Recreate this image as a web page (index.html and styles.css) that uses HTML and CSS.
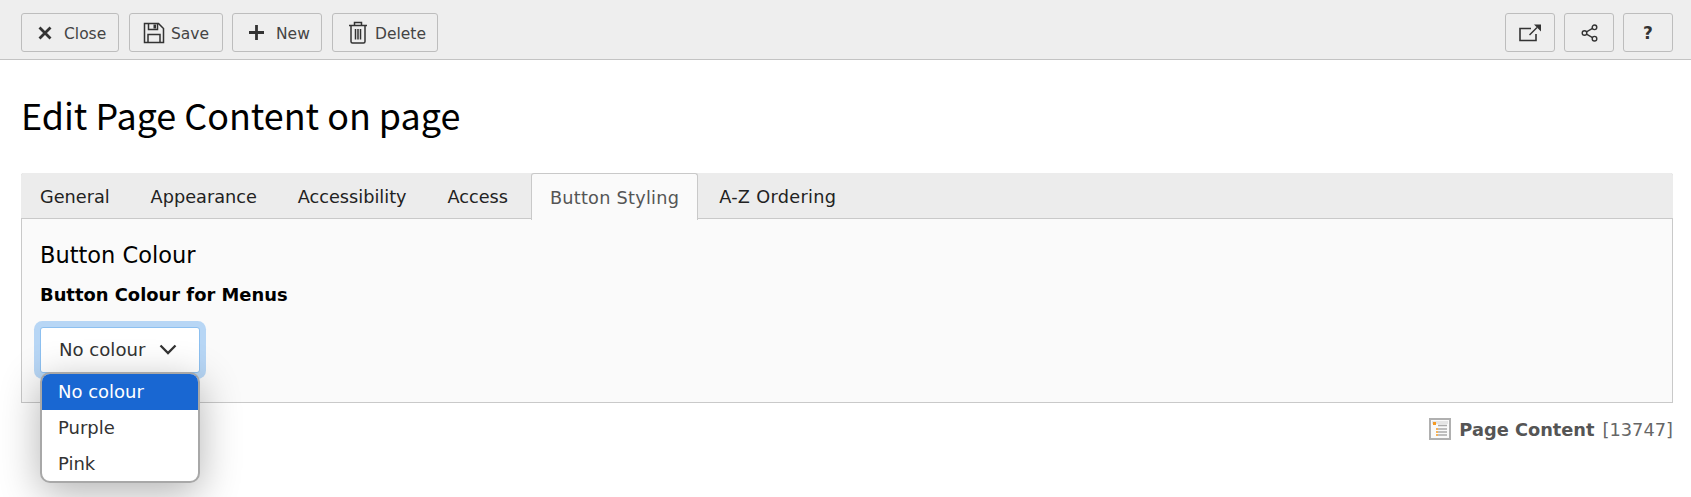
FILE: index.html
```html
<!DOCTYPE html>
<html lang="en">
<head>
<meta charset="utf-8">
<title>Edit Page Content on page</title>
<link rel="stylesheet" href="styles.css">
</head>
<body>
<header class="toolbar">
  <div class="group">
    <button class="btn btn-close"><svg class="ic" width="16" height="16" viewBox="0 0 16 16"><path d="M2.500 2.500l11 11M13.500 2.500l-11 11" fill="none" stroke="#333" stroke-width="2.800"/></svg><span>Close</span></button>
    <button class="btn btn-save"><svg class="ic" width="22" height="22" viewBox="0 0 22 22"><path d="M1.500 1.500h14l5 5v14h-19z M5.500 1.500v6h9v-6 M5 20.500v-8h12v8" fill="none" stroke="#333" stroke-width="1.500"/><rect x="10.500" y="2.500" width="2.500" height="4" fill="#333"/></svg><span>Save</span></button>
    <button class="btn btn-new"><svg class="ic" width="17" height="17" viewBox="0 0 17 17"><path d="M8.500 1v15M1 8.500h15" fill="none" stroke="#333" stroke-width="2.800"/></svg><span>New</span></button>
    <button class="btn btn-delete"><svg class="ic" width="20" height="23" viewBox="0 0 20 23"><path d="M1 4.500h18M3 4.500v16a1.500 1.500 0 0 0 1.500 1.500h11a1.500 1.500 0 0 0 1.500-1.500v-16M6.500 4V1.500h7V4M7.500 8v10.500M10 8v10.500M12.500 8v10.500" fill="none" stroke="#333" stroke-width="1.500"/></svg><span>Delete</span></button>
  </div>
  <div class="group group-right">
    <button class="btn btn-icon"><svg width="22" height="18" viewBox="0 0 22 18"><path d="M12 4.500H1v12h16V10" fill="none" stroke="#333" stroke-width="1.600"/><path d="M10.500 11L18 3.500" fill="none" stroke="#333" stroke-width="1.500"/><path d="M15 0.500h7v7z" fill="#333"/></svg></button>
    <button class="btn btn-icon"><svg width="17" height="18" viewBox="0 0 17 18"><g fill="none" stroke="#333" stroke-width="1.400"><circle cx="3.500" cy="9" r="2.300"/><circle cx="13.500" cy="3.300" r="2.300"/><circle cx="13.500" cy="14.700" r="2.300"/><path d="M5.500 7.800l6-3.400M5.500 10.200l6 3.400"/></g></svg></button>
    <button class="btn btn-icon btn-help">?</button>
  </div>
</header>
<main class="main">
  <h1 class="title">Edit Page Content on page</h1>
  <section class="panel">
    <nav class="tabs">
      <a class="tab">General</a>
      <a class="tab">Appearance</a>
      <a class="tab">Accessibility</a>
      <a class="tab">Access</a>
      <a class="tab active">Button Styling</a>
      <a class="tab tab-last">A-Z Ordering</a>
    </nav>
    <div class="tab-body">
      <h2 class="section-title">Button Colour</h2>
      <div class="field-label">Button Colour for Menus</div>
      <div class="select-wrap">
        <div class="select"><span>No colour</span><svg width="18" height="11" viewBox="0 0 18 11"><path d="M1.500 1.500l7.500 7.500 7.500-7.500" fill="none" stroke="#333" stroke-width="2.300"/></svg></div>
        <ul class="dropdown">
          <li class="opt selected">No colour</li>
          <li class="opt">Purple</li>
          <li class="opt">Pink</li>
        </ul>
      </div>
    </div>
  </section>
  <footer class="meta">
    <svg class="meta-ic" width="22" height="22" viewBox="0 0 22 22"><rect x="1" y="1" width="20" height="20" fill="#fafafa" stroke="#b0b0b0" stroke-width="2"/><rect x="3" y="3" width="16" height="3" fill="#e4e4e4"/><rect x="4" y="4" width="3" height="3" fill="#f59a23"/><path d="M9 7.500h9M9 11h9M9 14h9M9 17h9" stroke="#aaa" stroke-width="1.500"/><path d="M7 11h2M7 14h2M7 17h2" stroke="#f59a23" stroke-width="1.500"/></svg>
    <strong class="meta-name">Page Content</strong>
    <span class="meta-id">[13747]</span>
  </footer>
</main>
</body>
</html>
```
FILE: styles.css
```css
* { box-sizing: border-box; }
html, body { margin: 0; padding: 0; }
body {
  background: #fff;
  font-family: "DejaVu Sans", Verdana, sans-serif;
  color: #111;
  height: 497px;
  overflow: hidden;
}
.toolbar {
  height: 60px;
  background: #eeeeee;
  border-bottom: 1px solid #c3c3c3;
  display: flex;
  justify-content: space-between;
  padding: 13px 18px 0 21px;
}
.group { display: flex; gap: 10px; }
.group-right { gap: 9px; }
.btn {
  height: 39px;
  background: #eeeeee;
  border: 1px solid #bdbdbd;
  border-radius: 3px;
  display: flex;
  align-items: center;
  padding: 0 0 0 15px;
  color: #444;
  font: 15.500px "DejaVu Sans", Verdana, sans-serif;
}
.btn span { padding-top: 2px; }
.ic { flex: none; }
.btn-close { width: 98px; gap: 11px; }
.btn-save { width: 94px; margin-right: -1px; gap: 6px; padding-left: 13px; }
.btn-new { width: 90px; gap: 11px; }
.btn-delete { width: 106px; gap: 7px; }
.btn-icon { width: 50px; padding: 0; justify-content: center; }
.btn-help { font-weight: 700; font-size: 17px; color: #333; }
.main { padding: 0 18px 0 21px; }
.title {
  margin: 0;
  padding-top: 28px;
  height: 113px;
  font: 400 35.900px/52px "Noto Sans CJK JP", "Noto Sans", sans-serif;
  color: #000;
}
.panel {
  height: 230px;
  border: 1px solid #c9c9c9;
  border-top: 0;
  border-radius: 3px 3px 0 0;
  background: #fafafa;
}
.tabs {
  height: 46px;
  margin: 0 -1px;
  background: #ececec;
  border-bottom: 1px solid #c9c9c9;
  border-radius: 3px 3px 0 0;
  display: flex;
  align-items: stretch;
}
.tab {
  padding: 13px 19.900px 0 19px;
  margin-right: 2px;
  font-size: 17.700px;
  line-height: 22px;
  color: #222;
}
.tab.active {
  height: 47px;
  margin: 0 2px 0 1px;
  padding: 13px 18px 0;
  background: #fafafa;
  border: 1px solid #c9c9c9;
  border-bottom: 0;
  border-radius: 3px 3px 0 0;
  color: #555;
  letter-spacing: 0.25px;
}
.tab-last { letter-spacing: 0.3px; }
.tab-body { padding: 21px 18px 0; }
.section-title {
  margin: 0;
  font: 400 22.500px/30px "DejaVu Sans", Verdana, sans-serif;
  color: #000;
}
.field-label {
  margin-top: 15px;
  font-weight: 700;
  font-size: 17.900px;
  line-height: 20px;
  color: #000;
}
.select-wrap { position: relative; margin-top: 22px; width: 160px; }
.select {
  height: 46px;
  width: 160px;
  background: #fff;
  border: 1px solid #8dc0f0;
  border-radius: 3px;
  box-shadow: 0 0 0 6px #b7d6f5;
  display: flex;
  align-items: center;
  gap: 14px;
  padding: 0 18px 2px;
  font-size: 18.100px;
  white-space: nowrap;
  color: #333;
}
.dropdown {
  position: absolute;
  left: 0;
  top: 45px;
  z-index: 2;
  width: 160px;
  height: 111px;
  margin: 0;
  padding: 0;
  list-style: none;
  background: #fff;
  border: 2px solid #a8a8a8;
  border-radius: 10px;
  overflow: hidden;
  box-shadow: 0 10px 40px rgba(0, 0, 0, 0.3);
}
.opt {
  height: 36px;
  padding: 0 16px;
  font-size: 18px;
  line-height: 36px;
  color: #333;
}
.opt.selected { line-height: 35px; background: #1967d2; color: #fff; }
.meta {
  display: flex;
  justify-content: flex-end;
  align-items: center;
  gap: 8px;
  height: 22px;
  margin-top: 15px;
  font-size: 17.800px;
  color: #666;
}
.meta-name { color: #555; }
```
